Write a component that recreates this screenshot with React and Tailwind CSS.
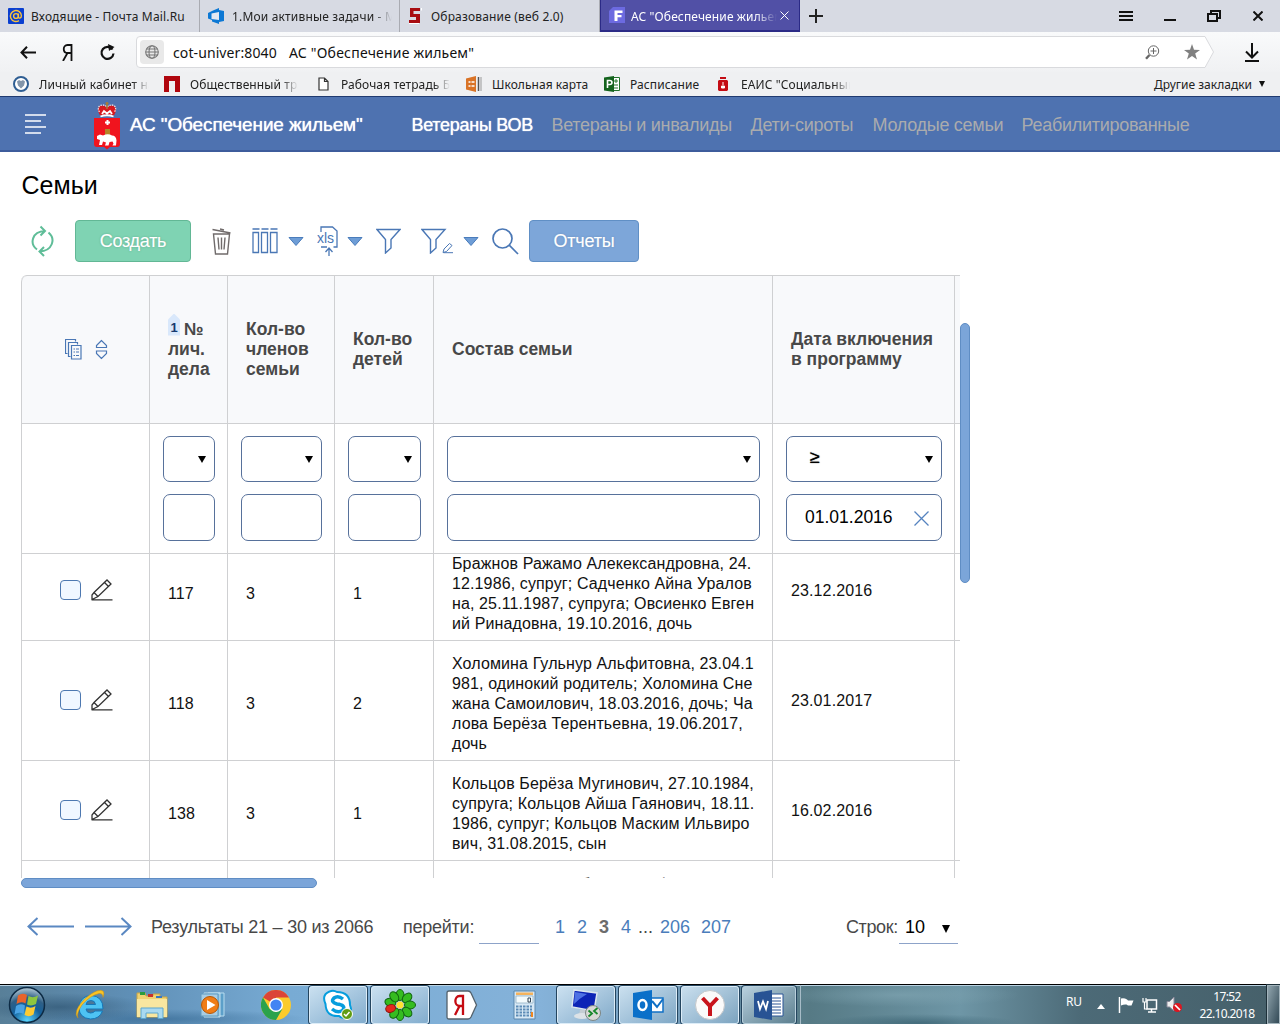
import React from "react";

const UI = "font-['Noto_Sans',sans-serif]";

/* ---------- browser chrome ---------- */

function MailIcon() {
  return (
    <svg width="16" height="16" viewBox="0 0 16 16">
      <rect width="16" height="16" rx="1" fill="#0a3fd0" />
      <circle cx="8" cy="8" r="2.4" fill="none" stroke="#f8c23c" strokeWidth="1.4" />
      <path d="M10.4 5.6v3.2c0 2 3 1.8 3-1A5.5 5.5 0 1 0 11 12.6" fill="none" stroke="#f8c23c" strokeWidth="1.4" />
    </svg>
  );
}

function DevopsIcon() {
  return (
    <svg width="17" height="16" viewBox="0 0 17 16">
      <path d="M0 5 5 2.500 11 0v2L16 3v10l-5 1v2L4 13.500V12L0 10.500z" fill="#0d78d4" />
      <path d="M3.500 5.500 11 4v8l-7.500-1z" fill="#e4e9f2" />
    </svg>
  );
}

function SIcon() {
  return (
    <svg width="16" height="16" viewBox="0 0 16 16">
      <path d="M2 0h10v3H5.500v3H12v9H1v-3h7V9H2z" fill="#a80d12" />
      <path d="M13.500 0v2.500M1 15.500h10" stroke="#fff" strokeWidth="1" />
    </svg>
  );
}

function FIcon() {
  return (
    <svg width="16" height="16" viewBox="0 0 16 16">
      <path d="M4 0h12v16H0V4z" fill="#6c6ae0" />
      <path d="M5.500 3.500h8v2.500H8.500v2h4v2.300h-4V14h-3z" fill="#fff" />
    </svg>
  );
}

function Tab({ icon, children, fade }) {
  return (
    <div className="flex h-8 w-[200px] shrink-0 items-center border-r border-[#a9abb2] pl-2">
      {icon}
      <span className={fade ? "mt-px ml-[7px] w-[160px] overflow-hidden whitespace-nowrap tracking-[0.170px] [mask-image:linear-gradient(to_right,black_88%,transparent)]" : "mt-px ml-[7px] whitespace-nowrap tracking-[0.170px]"}>
        {children}
      </span>
    </div>
  );
}

function TabBar() {
  return (
    <div className={`flex h-8 items-center bg-[#d7dae3] text-[12px] text-[#222] ${UI}`}>
      <Tab icon={<MailIcon />}>Входящие - Почта Mail.Ru</Tab>
      <Tab icon={<DevopsIcon />} fade>1.Мои активные задачи - Microsoft</Tab>
      <Tab icon={<SIcon />}>Образование (веб 2.0)</Tab>
      <div className="flex h-8 w-[200px] items-center border border-t-0 border-b-2 border-[#2b2a86] bg-[#5150a6] pl-2 text-white">
        <FIcon />
        <span className="mt-[3px] ml-[6px] w-[146px] overflow-hidden whitespace-nowrap tracking-[0.120px] [mask-image:linear-gradient(to_right,black_85%,transparent)]">АС "Обеспечение жильем"</span>
        <svg width="9" height="9" viewBox="0 0 9 9" className="mt-px ml-[3px]"><path d="M.5.5l8 8m0-8l-8 8" stroke="#fff" /></svg>
      </div>
      <svg width="14" height="14" viewBox="0 0 14 14" className="ml-[9px]"><path d="M7 0v14M0 7h14" stroke="#222" strokeWidth="2" /></svg>
      <svg width="14" height="10" viewBox="0 0 14 10" className="ml-auto"><path d="M0 1h14M0 5h14M0 9h14" stroke="#111" strokeWidth="2" /></svg>
      <svg width="12" height="10" viewBox="0 0 12 10" className="ml-[31px]"><path d="M0 9h12" stroke="#111" strokeWidth="2" /></svg>
      <svg width="14" height="12" viewBox="0 0 14 12" className="ml-[31px]"><path d="M4 3V1h9v7h-3M1 4h9v7H1z" fill="none" stroke="#111" strokeWidth="2" /></svg>
      <svg width="10" height="10" viewBox="0 0 10 10" className="mr-[17px] ml-[32px]"><path d="M.5.5l9 9m0-9l-9 9" stroke="#111" strokeWidth="2" /></svg>
    </div>
  );
}

function AddressBar() {
  return (
    <div className={`flex h-10 items-center bg-linear-to-b from-[#f9fafb] to-[#f0f1f3] text-[14px] text-[#111] ${UI}`}>
      <svg width="16" height="13" viewBox="0 0 16 13" className="ml-5"><path d="M7 .8 1.500 6.500 7 12.200M1.500 6.500H16" fill="none" stroke="#111" strokeWidth="2" /></svg>
      <svg width="11" height="17" viewBox="0 0 11 17" className="ml-[26px]"><path d="M9.500 17V1H5.500C.5 1 .5 9 5.500 9h4M5.500 9 1 17" fill="none" stroke="#111" strokeWidth="1.800" /></svg>
      <svg width="17" height="17" viewBox="0 0 17 17" className="ml-[26px]"><path d="M13.500 5.500A6 6 0 1 0 14.500 9.500" fill="none" stroke="#111" strokeWidth="2.200" /><path d="M9 0l6.500 3L10 7z" fill="#111" /></svg>
      <div className="relative ml-5 flex h-8 w-[1078px] items-center">
        <svg className="absolute inset-0" width="1078" height="32" viewBox="0 0 1078 32"><path d="M4 .5h1065l8.500 15.500-8.500 15.500H4a3.500 3.500 0 0 1-3.500-3.500V4A3.500 3.500 0 0 1 4 .5z" fill="#fff" stroke="#d9dadd" /></svg>
        <div className="relative ml-1 flex h-6 w-6 items-center justify-center rounded-sm bg-[#e9e9e9]">
          <svg width="14" height="14" viewBox="0 0 14 14" fill="none" stroke="#777" strokeWidth="1.100"><circle cx="7" cy="7" r="6.300" /><ellipse cx="7" cy="7" rx="3" ry="6.300" /><path d="M.7 7h12.600M1.500 4h11M1.500 10h11" /></svg>
        </div>
        <span className="relative ml-[9px] w-[116px] whitespace-nowrap tracking-[0.100px]">cot-univer:8040</span>
        <span className="relative whitespace-nowrap tracking-[0.200px]">АС "Обеспечение жильем"</span>
        <svg width="15" height="15" viewBox="0 0 15 15" className="relative ml-auto" fill="none" stroke="#666"><circle cx="8.500" cy="6" r="5.200" /><path d="M8.500 3v6M5.500 6h6" /><path d="M4.500 10 1 13.800" strokeWidth="2.400" /></svg>
        <svg width="16" height="16" viewBox="0 0 16 16" className="relative mr-[14px] ml-6"><path d="M8 0l2 5.800 6 .1-4.800 3.700L13 15.500 8 12l-5 3.500 1.800-5.900L0 5.900l6-.1z" fill="#808080" /></svg>
      </div>
      <svg width="14" height="19" viewBox="0 0 14 19" className="mt-px ml-[31px]"><path d="M7 0v14M1 8.500l6 6 6-6M0 18h14" fill="none" stroke="#111" strokeWidth="2" /></svg>
    </div>
  );
}

function Bookmark({ icon, children, box, label }) {
  return (
    <div className={`flex shrink-0 items-center ${box}`}>
      {icon}
      <span className={`mt-px overflow-hidden whitespace-nowrap ${label}`}>{children}</span>
    </div>
  );
}

function Bookmarks() {
  const fade = "[mask-image:linear-gradient(to_right,black_85%,transparent)]";
  return (
    <div className={`flex h-6 items-center bg-[#eff0f2] pl-[13px] text-[12px] text-[#222] ${UI}`}>
      <Bookmark box="w-[151px]" label={`ml-[10px] w-[110px] tracking-[0.1px] ${fade}`} icon={
        <svg width="16" height="16" viewBox="0 0 16 16"><circle cx="8" cy="8" r="7" fill="#fff" stroke="#2f5e93" strokeWidth="2" /><path d="M4 5.500 6 4l2 1 2-1 2 1.500-1 4-3 3-3-3z" fill="#8295aa" /></svg>
      }>Личный кабинет налог</Bookmark>
      <Bookmark box="w-[154px]" label={`ml-[10px] w-[108px] tracking-[0.1px] ${fade}`} icon={
        <svg width="16" height="16" viewBox="0 0 16 16"><path d="M0 0h16v16h-5V5H5v11H0z" fill="#b0060e" /></svg>
      }>Общественный транспорт</Bookmark>
      <Bookmark box="w-[148px]" label={`ml-[12px] w-[109px] tracking-[0.1px] ${fade}`} icon={
        <svg width="11" height="14" viewBox="0 0 11 14"><path d="M1 1h5.500L10 4.500V13H1zM6.500 1v3.500H10" fill="#fff" stroke="#333" strokeWidth="1.200" /></svg>
      }>Рабочая тетрадь Банка</Bookmark>
      <Bookmark box="w-[138px]" label="ml-[10px] tracking-[0.050px]" icon={
        <svg width="16" height="16" viewBox="0 0 16 16"><path d="M0 2.500 10 0v16L0 13.500z" fill="#d97327" /><path d="M2.500 6h2m1 0h3m-6 4h2m1 0h3" stroke="#fff" strokeWidth="1.500" /><path d="M12.500 1v14" stroke="#555" strokeWidth="1.500" /><path d="M15 1v14" stroke="#999" /></svg>
      }>Школьная карта</Bookmark>
      <Bookmark box="w-[114px]" label="ml-[10px] tracking-[0.1px]" icon={
        <svg width="16" height="16" viewBox="0 0 16 16"><path d="M8 1.500h7.500v13H8" fill="#fff" stroke="#22722b" /><path d="M10 5h4M12 3v4M10 9h4m-4 3h4" stroke="#22722b" /><path d="M0 1.500 10 0v16L0 14.500z" fill="#14631d" /><path d="M3.500 12V4.500h2.200c3 0 3 4 0 4H3.500" fill="none" stroke="#fff" strokeWidth="1.600" /></svg>
      }>Расписание</Bookmark>
      <Bookmark box="w-[160px]" label={`ml-[13px] w-[109px] tracking-[0.1px] ${fade}`} icon={
        <svg width="10" height="14" viewBox="0 0 10 14"><path d="M1 3h8l1 1v9l-1 1H1l-1-1V4z" fill="#c40c14" /><path d="M2 0h6v2H2z" fill="#c40c14" /><path d="M5 5v3M3.500 9h3v2h-3z" stroke="#fff" fill="#fff" /></svg>
      }>ЕАИС "Социальный</Bookmark>
      <span className="mt-px mr-[7px] ml-auto whitespace-nowrap">Другие закладки</span>
      <svg width="6" height="6" viewBox="0 0 6 6" className="mr-[15px]"><path d="M0 0h6L3 6z" fill="#111" /></svg>
    </div>
  );
}

/* ---------- application header ---------- */

function CoatOfArms() {
  return (
    <svg width="26" height="49" viewBox="0 0 26 49">
      <path d="M0 17h26v26q0 3-3 3h-7l-3 2.500L10 46H3q-3 0-3-3z" fill="#f0141e" />
      <path d="M6 14.500Q2 8 6 5q4-1.500 7 1.500Q16 3.500 20 5q4 3 0 9.500-7-2-14 0z" fill="#d71920" />
      <path d="M5.500 11Q3 7 6 4.500 10 3 13 6q3-3 7-1.500 3 2.500.5 6.500" fill="none" stroke="#f1dcdc" strokeWidth="1.300" strokeDasharray="1.500 1" />
      <path d="M6.500 15.500q6.500-2.500 13 0M8 13l2-3 3 2.500 3-2.500 2 3" fill="none" stroke="#fff" strokeWidth="1.800" />
      <path d="M13 1v7M11.500 2.500h3" stroke="#a87b34" strokeWidth="1.500" />
      <path d="M11 28h5v6h-5z" fill="#b58427" /><path d="M13.500 19v5M11 21.500h5" stroke="#fff" strokeWidth="2" />
      <path d="M3 35l3-1.500 3 1q5-2.500 9 0 4 0 4.500 5l-.5 5h-3.500l1-2-1-2-3 .5-1 3.500H11l1-3-3-1-1 3.500H5l1-5-3-1z" fill="#fff" />
    </svg>
  );
}

function AppHeader() {
  return (
    <header className="flex h-14 items-center border-t border-b-2 border-t-[#1f3a70] border-b-[#3d5c9c] bg-[#4e72b0] font-['Liberation_Sans',Arial,sans-serif] text-[18px] whitespace-nowrap text-[#aaabad]">
      <svg width="22" height="20" viewBox="0 0 22 20" className="ml-[25px]"><path d="M0 1h21M0 7h16M0 13h21M0 19h16" stroke="#fff" strokeWidth="1.600" /></svg>
      <div className="mt-[3px] ml-[47px]"><CoatOfArms /></div>
      <span className="mt-[3px] ml-[10px] w-[281.500px] text-[19px] tracking-[-0.140px] text-white [text-shadow:0_0_1px_#fff]">АС "Обеспечение жильем"</span>
      <nav className="mt-[3px] flex tracking-[-0.280px]">
        <a className="w-[140px] text-white [text-shadow:0_0_1px_#fff]">Ветераны ВОВ</a>
        <a className="w-[199px]">Ветераны и инвалиды</a>
        <a className="w-[122px]">Дети-сироты</a>
        <a className="w-[149px]">Молодые семьи</a>
        <a>Реабилитированные</a>
      </nav>
    </header>
  );
}

/* ---------- toolbar ---------- */

function Caret({ className }) {
  return (
    <svg width="16" height="9" viewBox="0 0 16 9" className={className}><path d="M1 .5h14L8 8.500z" fill="#6e9dd6" stroke="#4a7cbb" /></svg>
  );
}

function Toolbar() {
  return (
    <div className="flex h-[42px] items-center pl-[30px] text-white">
      <svg width="25" height="32" viewBox="0 0 25 32" fill="none" stroke="#5fbd98" strokeWidth="2"><path d="M7 24.500C-.5 19 1.500 6.500 15 6M10.500 1.500 15 6l-4.500 4.500" /><path d="M18.500 7.500C26 14 22.500 26 9.500 26.500M14 22 9.500 26.500 14 31" /></svg>
      <button className="ml-5 h-[42px] w-[116px] rounded border border-[#62b795] bg-[#7fd3b3] text-[18px] tracking-[-0.3px] [text-shadow:0_0_2px_#3b9b75,0_0_1px_#fff]">Создать</button>
      <svg width="19" height="27" viewBox="0 0 19 27" className="ml-[21px]" fill="none" stroke="#706b6b" strokeWidth="1.400"><path d="M.5 1.500 18.500 5M8 1l4 1M1.500 6h16l-2 20h-12zM6 9.500l1 12M9.500 9.500v12M13 9.500l-1 12" /></svg>
      <svg width="27" height="26" viewBox="0 0 27 26" className="ml-[21px]" fill="none" stroke="#4a77b5" strokeWidth="1.300"><path d="M.5 1h7m2 0h7m2 0h7" strokeWidth="1.700" /><path d="M1 4.500h5.500v20H1zM9.500 4.500h6v20h-6zM18.500 4.500H25v20h-6.500z" /></svg>
      <Caret className="ml-[9px]" />
      <svg width="22" height="31" viewBox="0 0 22 31" className="ml-[13px]" fill="none" stroke="#4a77b5" strokeWidth="1.300"><path d="M4 6V1h11.500L20 5v16h-3.500M4 21h6M12 30V22.500M8.500 26l3.500-4 3.500 4" /><text x="0" y="16.500" fontSize="14" fill="#4a77b5" stroke="none" fontFamily="Liberation Sans, Arial">xls</text></svg>
      <Caret className="ml-[8px]" />
      <svg width="25" height="26" viewBox="0 0 25 26" className="ml-[13px]" fill="none" stroke="#4a77b5" strokeWidth="1.400"><path d="M1 1.500h23l-9 10V20L9.500 25V11.500z" /></svg>
      <svg width="33" height="26" viewBox="0 0 33 26" className="ml-5" fill="none" stroke="#4a77b5" strokeWidth="1.400"><path d="M1 1.500h23l-9 10V20L9.500 25V11.500z" /><path d="M22 24.500l1-3.500 5.500-5.500 2.500 2-5.500 6zM22.500 24.700H32" strokeWidth="1" /></svg>
      <Caret className="ml-[9px]" />
      <svg width="27" height="27" viewBox="0 0 27 27" className="ml-[13px]" fill="none" stroke="#4a77b5" strokeWidth="1.700"><circle cx="10.500" cy="10.500" r="9.500" /><path d="M17.200 17.200 26 26" /></svg>
      <button className="ml-[10px] h-[42px] w-[110px] rounded border border-[#608fc5] bg-[#7da6d9] text-[18px] tracking-[-0.200px] [text-shadow:0_0_2px_#4373ad,0_0_1px_#fff]">Отчеты</button>
    </div>
  );
}

/* ---------- table ---------- */

const GRID = "grid grid-cols-[128px_78px_107px_99px_339px_182px_6px]";
const CELL = "border-l border-[#cfd0d2]";

function HeadCell({ children }) {
  return <div className={`${CELL} flex items-center pb-[2px] pl-[18px]`}><div>{children}</div></div>;
}

function TableHead() {
  return (
    <div className={`${GRID} h-[149px] overflow-hidden rounded-tl-md border-t border-b border-[#cfd0d2] bg-[#f8f9fb] text-[17.500px] leading-5 font-bold whitespace-nowrap text-[#484848]`}>
      <div className={`${CELL} flex items-center rounded-tl-md pl-[43px]`}>
        <svg width="17" height="21" viewBox="0 0 17 21" fill="none" stroke="#4a77b5" strokeWidth="1.200"><path d="M2.500 14.500H.5V.5h10v2M5.500 17.500H3.500v-14h9v2M6.500 6.500h9.500v13.500H6.500zM8.500 10H10m1 0h3M8.500 13H10m1 0h3M8.500 16.500H10m1 0h3" /></svg>
        <svg width="13" height="21" viewBox="0 0 13 21" className="ml-[13px]" fill="none" stroke="#4a77b5" strokeWidth="1.200"><path d="M6.500 1.500 1.500 6.500v2h10v-2zM6.500 19.500l-5-5v-2.500h10v2.500z" /></svg>
      </div>
      <HeadCell>
        <div className="flex h-5 items-center">
          <span className="-mt-[8px] mr-[4px] h-[22px] w-3 shrink-0 bg-[#d9e8fb] pt-[6px] text-center text-[13px] leading-4 text-[#173a70] [clip-path:polygon(50%_0,100%_6px,100%_100%,0_100%,0_6px)]">1</span>
          <span>№</span>
        </div>
        лич.<br />дела
      </HeadCell>
      <HeadCell>Кол-во<br />членов<br />семьи</HeadCell>
      <HeadCell>Кол-во<br />детей</HeadCell>
      <HeadCell>Состав семьи</HeadCell>
      <HeadCell>Дата включения<br />в программу</HeadCell>
      <div className={CELL} />
    </div>
  );
}

function FilterCell({ op, value }) {
  return (
    <div className={`${CELL} flex flex-col gap-3 pt-3 pr-3 pl-[13px] text-[18px] text-black`}>
      <div className="flex h-[46px] items-center justify-between rounded-[7px] border border-[#57719b] pr-2 pl-[23px]">
        <span className="-mt-1 [text-shadow:0_0_1px_#000]">{op}</span>
        <svg width="8" height="7" viewBox="0 0 8 7"><path d="M0 0h8L4 7z" fill="#000" /></svg>
      </div>
      <div className="flex h-[47px] items-center justify-between rounded-[7px] border border-[#57719b] pr-3 pl-[18px] text-[17.500px]">
        <span className="-mt-px">{value}</span>
        {value && <svg width="15" height="15" viewBox="0 0 15 15" className="mt-px"><path d="M.5.5l14 14m0-14l-14 14" stroke="#5583bf" strokeWidth="1.300" /></svg>}
      </div>
    </div>
  );
}

function FilterRow() {
  return (
    <div className={`${GRID} h-[130px] border-b border-[#cfd0d2]`}>
      <div className={CELL} />
      <FilterCell />
      <FilterCell />
      <FilterCell />
      <FilterCell />
      <FilterCell op="≥" value="01.01.2016" />
      <div className={CELL} />
    </div>
  );
}

const ROWS = [
  { id: "117", members: "3", kids: "1", date: "23.12.2016", lines: ["Бражнов Ражамо Алекександровна, 24.", "12.1986, супруг; Садченко Айна Уралов", "на, 25.11.1987, супруга; Овсиенко Евген", "ий Ринадовна, 19.10.2016, дочь"] },
  { id: "118", members: "3", kids: "2", date: "23.01.2017", lines: ["Холомина Гульнур Альфитовна, 23.04.1", "981, одинокий родитель; Холомина Сне", "жана Самоилович, 18.03.2016, дочь; Ча", "лова Берёза Терентьевна, 19.06.2017,", "дочь"] },
  { id: "138", members: "3", kids: "1", date: "16.02.2016", lines: ["Кольцов Берёза Мугинович, 27.10.1984,", "супруга; Кольцов Айша Гаянович, 18.11.", "1986, супруг; Кольцов Маским Ильвиро", "вич, 31.08.2015, сын"] },
];

function Row({ row }) {
  const num = `${CELL} flex items-center pt-[6px] pl-[18px]`;
  return (
    <div className={`${GRID} border-b border-[#cfd0d2] text-[16px] leading-5 tracking-[0.120px] whitespace-nowrap text-[#111]`}>
      <div className={`${CELL} flex items-center pb-[2px] pl-[38px]`}>
        <span className="h-5 w-[21px] rounded border border-[#4d78b0] bg-[#f0f7ff]" />
        <svg width="22" height="22" viewBox="0 0 22 22" className="ml-[10px]" fill="none" stroke="#333" strokeWidth="1.300"><path d="M1 20.500 1 16 3 13.500 16 1l4 4L7 17.500zM3 13.500l4 4M13.500 3.500l4 4M1 20.800h20.500" /></svg>
      </div>
      <div className={num}>{row.id}</div>
      <div className={num}>{row.members}</div>
      <div className={num}>{row.kids}</div>
      <div className={`${CELL} pt-[13px] pb-[6px] pl-[18px]`}>
        {row.lines.map((l) => <div key={l}>{l}</div>)}
      </div>
      <div className={`${CELL} flex items-center pl-[18px]`}>{row.date}</div>
      <div className={CELL} />
    </div>
  );
}

function Table() {
  return (
    <div className="mt-[13px] ml-[21px] flex">
      <div className="w-[939px]">
        <TableHead />
        <FilterRow />
        <div className="h-[324px] overflow-hidden">
          <div className="-mt-[13px]">
            {ROWS.map((r) => <Row key={r.id} row={r} />)}
            <div className={`${GRID} h-[100px] text-[16px] leading-5 whitespace-nowrap text-[#111]`}>
              <div className={CELL} /><div className={CELL} /><div className={CELL} /><div className={CELL} />
              <div className={`${CELL} pt-[14px] pl-[18px]`}>Степаненков Альберт Тимофеевич, 11.0</div>
              <div className={CELL} /><div className={CELL} />
            </div>
          </div>
        </div>
        <div className="h-[10px] w-[296px] rounded-full border border-[#5f8dc4] bg-[#7ba5d9]" />
      </div>
      <div className="mt-[48px] h-[260px] w-[10px] rounded-[5px] border border-[#5f8dc4] bg-[#7ba5d9]" />
    </div>
  );
}

/* ---------- pagination ---------- */

function Pagination() {
  return (
    <div className="mt-[22px] flex h-[34px] items-center pl-[27px] text-[18px] whitespace-nowrap text-[#484848]">
      <svg width="48" height="19" viewBox="0 0 48 19" className="-mt-px" fill="none" stroke="#5a88c2" strokeWidth="2"><path d="M10.500 1 1.500 9.500l9 8.500M1.500 9.500H47" /></svg>
      <svg width="48" height="19" viewBox="0 0 48 19" className="-mt-px ml-[10px]" fill="none" stroke="#5a88c2" strokeWidth="2"><path d="M36.500 1l9 8.500-9 8.500M45.500 9.500H0" /></svg>
      <span className="ml-[18px] w-[252px] tracking-[-0.230px]">Результаты 21 – 30 из 2066</span>
      <span className="w-[76px] tracking-[-0.250px]">перейти:</span>
      <span className="h-[34px] w-[60px] border-b border-[#8da3c9]" />
      <div className="flex pl-4 text-[#4a7dbb]">
        <span className="w-[22px]">1</span>
        <span className="w-[22px]">2</span>
        <span className="w-[22px] font-bold text-[#6c6c6c]">3</span>
        <span className="w-[17px]">4</span>
        <span className="w-[22px] text-[#484848]">...</span>
        <span className="w-[41px]">206</span>
        <span className="w-[145px]">207</span>
      </div>
      <span className="w-[53px] tracking-[-0.400px]">Строк:</span>
      <div className="flex h-[34px] w-[59px] items-center justify-between border-b border-[#8da3c9] pr-2 pl-[6px] text-black">
        <span className="mt-px">10</span>
        <svg width="8" height="8" viewBox="0 0 8 8" className="mt-1"><path d="M0 0h8L4 8z" fill="#000" /></svg>
      </div>
    </div>
  );
}

/* ---------- taskbar ---------- */

function Slot({ active, children }) {
  return (
    <div className="flex h-[39px] w-[62px] shrink-0 items-center justify-center">
      {active ? (
        <div className="flex h-[38px] w-[58px] items-center justify-center rounded-[3px] border border-[#dcecf7] bg-linear-to-br from-[#d3e6f3]/90 to-[#84acca]/70 shadow-[0_0_0_1px_#24455f]">{children}</div>
      ) : children}
    </div>
  );
}

function Taskbar() {
  return (
    <footer className={`flex h-10 items-center border-t border-black bg-[radial-gradient(ellipse_90px_14px_at_60px_22px,#274d6b99,transparent),radial-gradient(ellipse_150px_10px_at_160px_34px,#2b5f8a88,transparent),radial-gradient(ellipse_120px_12px_at_900px_10px,#80a5b2aa,transparent),radial-gradient(ellipse_100px_9px_at_920px_38px,#2d566699,transparent),linear-gradient(to_right,#587f98_0px,#5f8fb6_130px,#78abd4_290px,#85b2d9_540px,#7199b5_700px,#567a85_810px,#6e96a6_960px,#4c6a77_1080px,#46606a_1280px)] text-white shadow-[inset_0_1px_0_#b9d2e2] ${UI}`}>
      <div className="flex w-[59px] shrink-0 items-center pl-2">
        <svg width="38" height="38" viewBox="0 0 38 38">
          <defs><radialGradient id="orb" cx=".5" cy=".95" r=".95"><stop offset="0" stopColor="#5ad6ff" /><stop offset=".45" stopColor="#14609b" /><stop offset=".7" stopColor="#2f5f86" /><stop offset="1" stopColor="#b9ced9" /></radialGradient></defs>
          <circle cx="19" cy="19" r="17.500" fill="url(#orb)" stroke="#0d2b45" strokeWidth="1.500" />
          <path d="M10 9.500q4.500-3 9-.5l-1.500 8.500q-4.500-2.500-9 .5z" fill="#e9642b" />
          <path d="M20.500 10q4.500 2.500 9.500-.5l-2 8.500q-4.500 2.500-9 .5z" fill="#8ec63f" />
          <path d="M8 20q4.500-3 9-.5l-1.500 8.500q-4.500-2.500-9 .5z" fill="#4aa3e4" />
          <path d="M18.500 20.500q4.500 2.500 9-.5l-2 8.500q-4.500 3-9 .5z" fill="#fccb33" />
        </svg>
      </div>
      <Slot>
        <svg width="32" height="32" viewBox="0 0 32 32"><path fillRule="evenodd" d="M29 20H12q.5 4 4.500 4 3 0 4.500-2h7.500Q25.500 30 16.500 30 5 29 5 18.500 6 7 17 6.500 29 7 29 20zM12 15.500h9.500Q21 11.500 17 11.500q-4.500 0-5 4z" fill="#4ec3f3" stroke="#1577b8" strokeWidth="1" /><path d="M4 29Q-2 23 11 9.500 25-2 29.500 2.500q1 2-.5 6 0-4.500-4-4Q16 6.500 8 16 2 25 4 29z" fill="#f8c424" stroke="#c98c12" strokeWidth=".5" /></svg>
      </Slot>
      <Slot>
        <svg width="32" height="30" viewBox="0 0 32 30"><path d="M1 3h8l1 3h7V4h7v3h7v20H1z" fill="#efd272" stroke="#c8a447" /><path d="M4 2h5v3H4z" fill="#2a9b3c" /><path d="M12 4h5v3h-5z" fill="#c8322d" /><path d="M20 6h6v2h-6z" fill="#3778c4" /><path d="M1 9h30v18H1z" fill="#f8e6a0" /><path d="M5 28.500V18h22v10.500h-5V23H10v5.500z" fill="#a9d9f0" stroke="#5ba6d0" /></svg>
      </Slot>
      <Slot>
        <svg width="28" height="26" viewBox="0 0 28 26"><path d="M8 1h16v23H8z" fill="#5c9fc9" stroke="#b8dcef" /><path d="M4 1h16v24H4z" fill="#83b9da" stroke="#c5e2f0" /><path d="M1 2h17v22H1z" fill="#a8cde4" stroke="#5e9bc0" /><circle cx="10" cy="13" r="8.500" fill="#f07d16" stroke="#b65706" /><path d="M7 8l8.500 5L7 18z" fill="#fff" /></svg>
      </Slot>
      <Slot>
        <svg width="30" height="30" viewBox="0 0 30 30"><circle cx="15" cy="15" r="15" fill="#fbcb2c" /><path d="M15 15 2 7.500A15 15 0 0 1 28 7.500H15z" fill="#db4437" /><path d="M2 7.500A15 15 0 0 0 15 30l6.500-11.300L15 22l-6.500-3.300z" fill="#2ba24c" /><circle cx="15" cy="15" r="7" fill="#fff" /><circle cx="15" cy="15" r="5.600" fill="#4384f3" /></svg>
      </Slot>
      <Slot active>
        <svg width="32" height="32" viewBox="0 0 32 32"><path d="M9 2q3-1 6 1 13 0 13 13 3 8-3 12-5 2-8-1Q4 28 3.500 15-1 5 9 2z" fill="#fff" stroke="#069ddd" strokeWidth="2" /><path d="M21 10q-5-4-9-1-4 4 3 6 9 1 6 6-5 4-11-1" fill="none" stroke="#069ddd" strokeWidth="3.500" /><circle cx="25" cy="25" r="5.500" fill="#609c13" stroke="#fff" /><path d="M22 25l2 2 3.500-4" fill="none" stroke="#fff" strokeWidth="1.500" /></svg>
      </Slot>
      <Slot active>
        <svg width="32" height="32" viewBox="0 0 32 32">
          <g fill="#35bc20" stroke="#126510" strokeWidth="1">
            <ellipse cx="16" cy="6" rx="4" ry="5.500" /><ellipse cx="16" cy="6" rx="4" ry="5.500" transform="rotate(45 16 16)" /><ellipse cx="16" cy="6" rx="4" ry="5.500" transform="rotate(90 16 16)" /><ellipse cx="16" cy="6" rx="4" ry="5.500" transform="rotate(135 16 16)" /><ellipse cx="16" cy="6" rx="4" ry="5.500" transform="rotate(180 16 16)" /><ellipse cx="16" cy="6" rx="4" ry="5.500" transform="rotate(215 16 16)" /><ellipse cx="16" cy="6" rx="4" ry="5.500" transform="rotate(285 16 16)" /><ellipse cx="16" cy="6" rx="4" ry="5.500" transform="rotate(325 16 16)" />
          </g>
          <ellipse cx="16" cy="6" rx="3.800" ry="5" transform="rotate(250 16 16)" fill="#e3281d" stroke="#8f120c" /><circle cx="16" cy="16" r="3.500" fill="#ffe233" />
        </svg>
      </Slot>
      <Slot>
        <svg width="32" height="30" viewBox="0 0 32 30"><path d="M3 1h19q2 0 3 2l5.500 12L25 27q-1 2-3 2H3q-2 0-2-2V3q0-2 2-2z" fill="#fff" stroke="#53616b" strokeWidth="1.300" /><path d="M17 25V6h-3.500C8 6 8 16 13.500 16H17m-3.500 0L9 25" fill="none" stroke="#c50b12" strokeWidth="2.300" /></svg>
      </Slot>
      <Slot>
        <svg width="23" height="30" viewBox="0 0 23 30"><path d="M1 1h21v28H1z" fill="#d7e8f5" stroke="#5a87ad" /><path d="M3 2.500h17v2.500H3z" fill="#f5b35c" /><path d="M3 6h17v7H3z" fill="#f3fafc" stroke="#84a8be" strokeWidth=".7" /><path d="M15 8h2.500v4H15z" fill="none" stroke="#345" /><path d="M3 16.500h16M3 19.500h16M3 22.500h16M3 25.500h16" stroke="#5c8bb6" strokeWidth="2" strokeDasharray="2.500 1" /><path d="M18 22h2v5h-2z" fill="#ef861f" /></svg>
      </Slot>
      <Slot active>
        <svg width="32" height="32" viewBox="0 0 32 32"><path d="M4 1l23 3-3 18-22-4z" fill="#0c24b6" stroke="#dce7ef" strokeWidth="1.500" /><path d="M5 3l12 2Q10 9 4 15z" fill="#4e71e4" /><path d="M10 21h6v5H9z" fill="#c5cdd3" /><ellipse cx="12" cy="27" rx="8" ry="3" fill="#dce2e6" /><circle cx="23" cy="24" r="7.500" fill="#d8d8d5" stroke="#7c8583" /><path d="M18.500 21.500l3.500 3-3.500 3M27.500 19l-3.500 3 3.500 3" fill="none" stroke="#18872b" strokeWidth="1.800" /></svg>
      </Slot>
      <Slot active>
        <svg width="31" height="30" viewBox="0 0 31 30"><path d="M17 8h13v14H17z" fill="#fff" stroke="#1070c5" strokeWidth="1.500" /><path d="M19 11l5 6 6-8" fill="none" stroke="#1070c5" strokeWidth="2" /><path d="M0 3l19-3v30L0 27z" fill="#0b70c9" /><ellipse cx="9.500" cy="15" rx="4" ry="5" fill="none" stroke="#fff" strokeWidth="2.500" /></svg>
      </Slot>
      <Slot active>
        <svg width="32" height="32" viewBox="0 0 32 32"><circle cx="16" cy="16" r="14.500" fill="#fafafa" stroke="#c3c7ca" /><path d="M8.500 9l7.500 8 7.500-8M16 16v11" fill="none" stroke="#c8141c" strokeWidth="4" /></svg>
      </Slot>
      <div className="flex h-[39px] w-[60px] shrink-0 items-center border-r border-[#a7bcc7] pl-px">
        <div className="flex h-[38px] w-[54px] items-center justify-center rounded-[3px] border border-[#b8cfdb] bg-linear-to-br from-[#b8d0de] to-[#5d8090] shadow-[0_0_0_1px_#24455f]">
          <svg width="30" height="30" viewBox="0 0 30 30"><path d="M16 4h13v22H16z" fill="#fff" stroke="#2a5496" /><path d="M18 8h9m-9 3h9m-9 3h9m-9 3h9m-9 3h9m-9 3h9" stroke="#2a5496" /><path d="M0 3l18-3v30L0 27z" fill="#285394" /><path d="M4 11l2 8 3-7.500 3 7.500 2-8" fill="none" stroke="#fff" strokeWidth="1.800" /></svg>
        </div>
      </div>
      <span className="-mt-[5px] ml-[265px] w-[31px] text-[12px] tracking-[-0.2px]">RU</span>
      <svg width="8" height="5" viewBox="0 0 8 5" className="mt-1"><path d="M4 0l4 5H0z" fill="#fff" /></svg>
      <svg width="17" height="16" viewBox="0 0 17 16" className="ml-[13px]"><path d="M1.500 0v16" stroke="#fff" strokeWidth="1.500" /><path d="M3 1.500q3-1 6 1l1 1h5.500l-2 5H10L8.500 7.500Q6 7 3 8.500z" fill="#fff" /></svg>
      <svg width="16" height="16" viewBox="0 0 16 16" className="ml-[7px]"><path d="M5 3h9.500v9H5zM9.500 12v2.500M6 15h8" fill="none" stroke="#fff" strokeWidth="1.500" /><path d="M1 1v4h3V1M2.500 5v7H5" fill="none" stroke="#fff" strokeWidth="1.200" /></svg>
      <svg width="17" height="16" viewBox="0 0 17 16" className="ml-[8px]"><path d="M1 4.500h2.500L8 0v14L3.500 10H1z" fill="#eee" stroke="#889" /><circle cx="11.500" cy="10.500" r="4.500" fill="#dd1620" /><path d="M9 8l5 5" stroke="#fff" strokeWidth="1.700" /></svg>
      <div className="ml-auto w-[68px] text-center text-[12px] leading-[17px] tracking-[-0.650px] whitespace-nowrap">17:52<br />22.10.2018</div>
      <div className="ml-[6px] h-[39px] w-[13px] border border-[#a3b4bc] bg-linear-to-br from-[#90a4ad] to-[#344b57] shadow-[0_0_0_1px_#1d3039]" />
    </footer>
  );
}

export default function App() {
  return (
    <div className="flex h-[1024px] w-[1280px] flex-col overflow-hidden bg-white">
      <TabBar />
      <AddressBar />
      <Bookmarks />
      <AppHeader />
      <main className="min-h-0 flex-1 font-['Liberation_Sans',Arial,sans-serif]">
        <h1 className="flex h-[68px] items-center pl-[21.500px] text-[25px] text-black">Семьи</h1>
        <Toolbar />
        <Table />
        <Pagination />
      </main>
      <Taskbar />
    </div>
  );
}
